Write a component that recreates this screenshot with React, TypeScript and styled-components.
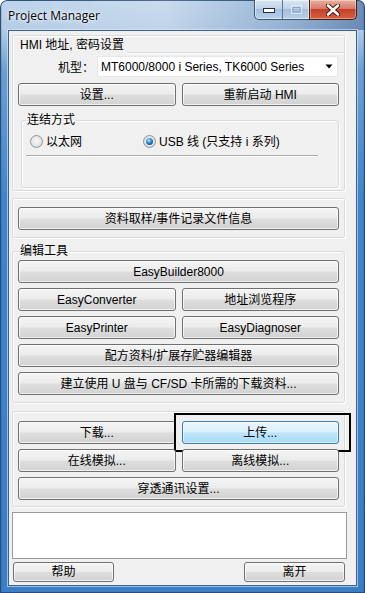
import React from "react";
import styled, { createGlobalStyle, css } from "styled-components";

const GlobalStyle = createGlobalStyle`
  html, body { margin: 0; padding: 0; }
  body {
    width: 365px;
    height: 593px;
    overflow: hidden;
    background: #ffffff;
    font-family: "Liberation Sans", "Noto Sans CJK SC", sans-serif;
    font-size: 12px;
    color: #000;
  }
  * { box-sizing: border-box; }
`;

const Window = styled.div`
  width: 365px;
  height: 593px;
  display: flex;
  flex-direction: column;
  border-radius: 7px 7px 0 0;
  overflow: hidden;
  background:
    linear-gradient(90deg, rgba(20, 50, 90, 0.55) 0, rgba(20, 50, 90, 0) 2px, rgba(20, 50, 90, 0) 363px, rgba(20, 50, 90, 0.55) 365px),
    linear-gradient(180deg, #bed4ea 0, #b3cbe5 30px, #6c9fd2 70px, #3f85cc 200px, #3a7fc6 100%);
  box-shadow: inset 0 0 0 1px #2a4d76;
`;

const TitleBar = styled.div`
  height: 30px;
  flex: none;
  display: flex;
  align-items: flex-start;
  padding: 0 8px 0 8px;
  background: linear-gradient(90deg, rgba(255, 255, 255, 0) 0, rgba(255, 255, 255, 0.18) 45%, rgba(40, 90, 150, 0.25) 80%, rgba(30, 70, 130, 0.5) 100%);
`;

const TitleText = styled.div`
  font-family: "Open Sans", "Noto Sans", sans-serif;
  font-size: 12px;
  line-height: 16px;
  margin-top: 8px;
  color: #000;
  text-shadow: 0 0 6px rgba(255, 255, 255, 0.95), 0 0 3px rgba(255, 255, 255, 0.9);
`;

const Controls = styled.div`
  margin-left: auto;
  display: flex;
  height: 20px;
`;

const MinMaxGroup = styled.div`
  display: flex;
  height: 20px;
  border: 1px solid #3b5878;
  border-top: none;
  border-right: none;
  border-radius: 0 0 0 5px;
  overflow: hidden;
  background: linear-gradient(180deg, #d9e6f3 0%, #bfd2e7 45%, #a5bfdc 50%, #b7cfe8 100%);
  box-shadow: inset 0 0 0 1px rgba(255, 255, 255, 0.5);
`;

const CtrlButton = styled.div<{ $w: number; $divider?: boolean }>`
  width: ${(p) => p.$w}px;
  height: 100%;
  display: flex;
  align-items: center;
  justify-content: center;
  ${(p) =>
    p.$divider &&
    css`
      border-left: 1px solid #5d7899;
    `}
`;

const CloseButton = styled.div`
  width: 48px;
  height: 20px;
  display: flex;
  align-items: center;
  justify-content: center;
  border: 1px solid #4a1e18;
  border-top: none;
  border-radius: 0 0 5px 0;
  background: linear-gradient(180deg, #eab0a2 0%, #d77a66 45%, #c5412b 50%, #d7603f 100%);
  box-shadow: inset 0 0 0 1px rgba(255, 255, 255, 0.35);
`;

const Client = styled.div`
  height: 556px;
  flex: none;
  margin: 0 8px;
  background: #f0f0f0;
  border: 1px solid #3e5f86;
  box-shadow: 0 0 0 1px rgba(220, 235, 250, 0.6);
  display: flex;
  flex-direction: column;
  padding: 0 0 0 3px;
`;

const Panel = styled.div<{ $mt: number; $pad: string }>`
  width: 333px;
  margin-top: ${(p) => p.$mt}px;
  padding: ${(p) => p.$pad};
  border: 1px solid #d8dbde;
  border-radius: 2px;
  box-shadow: inset 1px 1px 0 #ffffff, 1px 1px 0 #ffffff;
  display: flex;
  flex-direction: column;
`;

const PanelHeader = styled.div`
  display: flex;
  align-items: flex-end;
  height: 17px;
`;

const Caption = styled.span`
  line-height: 15px;
  margin-left: 7px;
  white-space: nowrap;
`;

const HeaderRule = styled.div`
  flex: 1;
  margin-left: 3px;
  border-bottom: 1px solid #d8dbde;
  box-shadow: 0 1px 0 #ffffff;
`;

const FieldRow = styled.div`
  display: flex;
  justify-content: flex-end;
  align-items: center;
  margin-top: 3px;
  padding-right: 6px;
  height: 21px;
`;

const FieldLabel = styled.span`
  margin-right: 3px;
  white-space: nowrap;
`;

const Select = styled.div`
  width: 241px;
  height: 21px;
  display: flex;
  align-items: center;
  padding-left: 3px;
  background: #ffffff;
  border: 1px solid #e4e8ec;
  white-space: nowrap;
`;

const SelectText = styled.span`
  flex: 1;
  line-height: 16px;
`;

const SelectArrow = styled.span`
  width: 16px;
  display: flex;
  justify-content: center;
`;

const ButtonGrid = styled.div<{ $cols: number; $mt: number; $gap: number; $px: number }>`
  display: grid;
  grid-template-columns: repeat(${(p) => p.$cols}, 1fr);
  column-gap: 6px;
  row-gap: ${(p) => p.$gap}px;
  margin-top: ${(p) => p.$mt}px;
  padding: 0 ${(p) => p.$px}px;
`;

const Btn = styled.div<{ $hot?: boolean; $span?: number; $h: number }>`
  position: relative;
  height: ${(p) => p.$h}px;
  grid-column: span ${(p) => p.$span ?? 1};
  display: flex;
  align-items: center;
  justify-content: center;
  line-height: 16px;
  white-space: nowrap;
  color: #000;
  border-radius: 3px;
  ${(p) =>
    p.$hot
      ? css`
          border: 1px solid #3c7fb1;
          background: linear-gradient(180deg, #eaf6fd 0%, #d9f0fc 48%, #bee6fd 52%, #a7d9f5 100%);
          box-shadow: inset 0 0 0 1px rgba(255, 255, 255, 0.55);
        `
      : css`
          border: 1px solid #707070;
          background: linear-gradient(180deg, #f4f4f4 0%, #ececec 48%, #dedede 52%, #d2d2d2 100%);
          box-shadow: inset 0 0 0 1px rgba(255, 255, 255, 0.7);
        `}
`;

const FocusRing = styled.div`
  position: absolute;
  top: -9px;
  left: -9px;
  right: -13px;
  bottom: -9px;
  border: 2px solid #000;
  pointer-events: none;
`;

const GroupBox = styled.fieldset<{ $mt: number; $ml: number; $w: number; $pb: number }>`
  margin: ${(p) => p.$mt}px 0 0 ${(p) => p.$ml}px;
  width: ${(p) => p.$w}px;
  min-width: 0;
  padding: 0 0 ${(p) => p.$pb}px 0;
  border: 1px solid #d8dbde;
  border-radius: 3px;
  box-shadow: inset 1px 1px 0 #ffffff, 1px 1px 0 #ffffff;
`;

const GroupLegend = styled.legend<{ $ml: number }>`
  margin-left: ${(p) => p.$ml}px;
  padding: 0 1px;
  line-height: 14px;
  font-size: 12px;
`;

const RadioRow = styled.div`
  display: flex;
  align-items: center;
  height: 13px;
  margin-top: 8px;
  padding-left: 8px;
`;

const RadioOption = styled.label<{ $w?: number }>`
  display: flex;
  align-items: center;
  gap: 3px;
  white-space: nowrap;
  ${(p) => (p.$w ? `width: ${p.$w}px;` : "")}
  line-height: 14px;
`;

const RadioCircle = styled.span<{ $checked?: boolean }>`
  width: 13px;
  height: 13px;
  flex: none;
  border-radius: 50%;
  border: 1px solid #8f9396;
  background: radial-gradient(circle at 50% 45%, #f8f8f8 0%, #e6e6e6 55%, #cfd0d1 100%);
  display: flex;
  align-items: center;
  justify-content: center;
  &::after {
    content: "";
    display: ${(p) => (p.$checked ? "block" : "none")};
    width: 7px;
    height: 7px;
    border-radius: 50%;
    background: radial-gradient(circle at 40% 35%, #b9f0ff 0%, #3a9ad6 35%, #17558e 75%, #0d3c6a 100%);
  }
`;

const Separator = styled.div`
  margin: 7px 0 0 4px;
  width: 292px;
  height: 1px;
  background: #a8acb0;
  box-shadow: 0 1px 0 #ffffff;
`;

const MessageBox = styled.div`
  width: 335px;
  height: 47px;
  margin-top: 5px;
  background: #ffffff;
  border: 1px solid #9a9a9a;
`;

const FooterRow = styled.div`
  width: 333px;
  margin-top: 3px;
  padding-left: 1px;
  display: flex;
  justify-content: space-between;
`;

const FooterButton = styled(Btn)`
  width: 101px;
`;

const MinimizeIcon = () => (
  <svg width="12" height="6" viewBox="0 0 12 6">
    <rect x="0.5" y="1.5" width="11" height="4" fill="#ffffff" stroke="#1e2f45" strokeWidth="1" />
  </svg>
);

const MaximizeIcon = () => (
  <svg width="11" height="9" viewBox="0 0 11 9">
    <rect x="0.5" y="0.5" width="10" height="8" fill="none" stroke="#e6eef7" strokeWidth="1" opacity="0.8" />
    <rect x="2" y="2.5" width="7" height="4.5" fill="none" stroke="#8ea6c2" strokeWidth="1" />
  </svg>
);

const CloseIcon = () => (
  <svg width="14" height="12" viewBox="0 0 14 12">
    <path d="M2 1.5 L12 10.5 M12 1.5 L2 10.5" stroke="#3a1510" strokeWidth="4.4" strokeLinecap="round" />
    <path d="M2 1.5 L12 10.5 M12 1.5 L2 10.5" stroke="#ffffff" strokeWidth="2.6" strokeLinecap="round" />
  </svg>
);

const ArrowIcon = () => (
  <svg width="8" height="5" viewBox="0 0 8 5">
    <path d="M0.5 0.5 L7.5 0.5 L4 4.5 Z" fill="#000" />
  </svg>
);

export default function App() {
  return (
    <>
      <GlobalStyle />
      <Window>
        <TitleBar>
          <TitleText>Project Manager</TitleText>
          <Controls>
            <MinMaxGroup>
              <CtrlButton $w={27}>
                <MinimizeIcon />
              </CtrlButton>
              <CtrlButton $w={27} $divider>
                <MaximizeIcon />
              </CtrlButton>
            </MinMaxGroup>
            <CloseButton>
              <CloseIcon />
            </CloseButton>
          </Controls>
        </TitleBar>
        <Client>
          <Panel $mt={4} $pad="0 0 2px 0">
            <PanelHeader>
              <Caption>HMI 地址, 密码设置</Caption>
              <HeaderRule />
            </PanelHeader>
            <FieldRow>
              <FieldLabel>机型：</FieldLabel>
              <Select>
                <SelectText>MT6000/8000 i Series, TK6000 Series</SelectText>
                <SelectArrow>
                  <ArrowIcon />
                </SelectArrow>
              </Select>
            </FieldRow>
            <ButtonGrid $cols={2} $mt={6} $gap={5} $px={5}>
              <Btn $h={23}>设置...</Btn>
              <Btn $h={23}>重新启动 HMI</Btn>
            </ButtonGrid>
            <GroupBox $mt={7} $ml={8} $w={318} $pb={31}>
              <GroupLegend $ml={4}>连结方式</GroupLegend>
              <RadioRow>
                <RadioOption $w={113}>
                  <RadioCircle />
                  以太网
                </RadioOption>
                <RadioOption>
                  <RadioCircle $checked />
                  USB 线 (只支持 i 系列)
                </RadioOption>
              </RadioRow>
              <Separator />
            </GroupBox>
          </Panel>

          <Panel $mt={7} $pad="8px 5px 7px 5px">
            <Btn $h={23}>资料取样/事件记录文件信息</Btn>
          </Panel>

          <GroupBox $mt={6} $ml={0} $w={333} $pb={7}>
            <GroupLegend $ml={6}>编辑工具</GroupLegend>
            <ButtonGrid $cols={2} $mt={2} $gap={5} $px={5}>
              <Btn $h={23} $span={2}>EasyBuilder8000</Btn>
              <Btn $h={23}>EasyConverter</Btn>
              <Btn $h={23}>地址浏览程序</Btn>
              <Btn $h={23}>EasyPrinter</Btn>
              <Btn $h={23}>EasyDiagnoser</Btn>
              <Btn $h={23} $span={2}>配方资料/扩展存贮器编辑器</Btn>
              <Btn $h={23} $span={2}>建立使用 U 盘与 CF/SD 卡所需的下载资料...</Btn>
            </ButtonGrid>
          </GroupBox>

          <Panel $mt={8} $pad="9px 0 6px 0">
            <ButtonGrid $cols={2} $mt={0} $gap={5} $px={5}>
              <Btn $h={23}>下载...</Btn>
              <Btn $h={23} $hot>
                上传...
                <FocusRing />
              </Btn>
              <Btn $h={23}>在线模拟...</Btn>
              <Btn $h={23}>离线模拟...</Btn>
              <Btn $h={23} $span={2}>穿透通讯设置...</Btn>
            </ButtonGrid>
          </Panel>

          <MessageBox />

          <FooterRow>
            <FooterButton $h={20}>帮助</FooterButton>
            <FooterButton $h={20}>离开</FooterButton>
          </FooterRow>
        </Client>
      </Window>
    </>
  );
}
